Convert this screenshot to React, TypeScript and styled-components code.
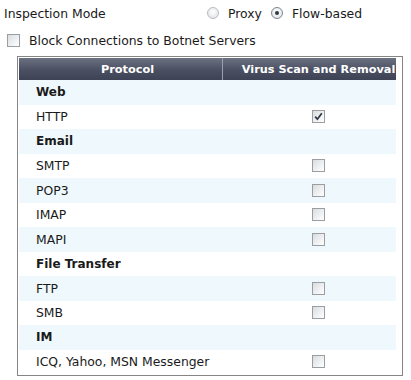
import React from "react";
import styled, { createGlobalStyle } from "styled-components";

const Global = createGlobalStyle`
  html, body { margin: 0; padding: 0; background: #fff; }
  body { font-family: "DejaVu Sans", Verdana, sans-serif; font-size: 12.4px; color: #1a1a1a; }
`;

const Page = styled.div`
  width: 411px;
  height: 380px;
  overflow: hidden;
  display: flex;
  flex-direction: column;
`;

const ModeRow = styled.div`
  display: flex;
  align-items: center;
  height: 26px;
  padding-left: 4px;
`;

const ModeLabel = styled.span`
  width: 203px;
`;

const RadioOption = styled.label`
  display: flex;
  align-items: center;
  gap: 9px;
  margin-right: 9px;
`;

const Radio = styled.span<{ $on?: boolean }>`
  width: 10px;
  height: 10px;
  border-radius: 50%;
  border: 1px solid ${(p) => (p.$on ? "#7d8692" : "#b8bcc0")};
  background: radial-gradient(circle at 50% 40%, #ffffff 0%, #e6e8ea 70%, #d2d5d8 100%);
  display: flex;
  align-items: center;
  justify-content: center;
  &::after {
    content: "";
    display: ${(p) => (p.$on ? "block" : "none")};
    width: 4px;
    height: 4px;
    border-radius: 50%;
    background: #2f3a48;
  }
`;

const BotnetRow = styled.label`
  display: flex;
  align-items: center;
  gap: 9px;
  height: 28px;
  padding-left: 7px;
  margin-bottom: 1px;
`;

const Box = styled.span<{ $checked?: boolean }>`
  width: 11px;
  height: 11px;
  border: 1px solid #9a9ea3;
  background: linear-gradient(135deg, #d9dcdf 0%, #f4f5f6 70%, #ffffff 100%);
  display: flex;
  align-items: center;
  justify-content: center;
  flex: none;
`;

const TableFrame = styled.div`
  margin-left: 17px;
  margin-top: 1px;
  width: 381px;
  border: 1px solid #858585;
  padding: 1px 2px 1px 1px;
`;

const Grid = styled.div`
  display: grid;
  grid-template-columns: 203px 174px;
`;

const HeadCell = styled.div<{ $shift: number }>`
  height: 22px;
  display: flex;
  align-items: center;
  justify-content: center;
  padding-left: ${(p) => p.$shift}px;
  white-space: nowrap;
  overflow: hidden;
  color: #fff;
  font-weight: bold;
  font-size: 11.3px;
  background: linear-gradient(#6c7282, #4a5061 55%, #3d4354);
  & + & { border-left: 1px solid #9aa0ad; }
`;

const Cell = styled.div<{ $alt: boolean; $center?: boolean; $bold?: boolean }>`
  height: 24.5px;
  display: flex;
  align-items: center;
  justify-content: ${(p) => (p.$center ? "center" : "flex-start")};
  padding-left: ${(p) => (p.$center ? "18px" : "17px")};
  background: ${(p) => (p.$alt ? "#eff8fc" : "#ffffff")};
  font-weight: ${(p) => (p.$bold ? "bold" : "normal")};
  font-size: ${(p) => (p.$bold ? "12px" : "12.4px")};
  white-space: nowrap;
`;

type Row = { label: string; group?: boolean; checked?: boolean };

const rows: Row[] = [
  { label: "Web", group: true },
  { label: "HTTP", checked: true },
  { label: "Email", group: true },
  { label: "SMTP" },
  { label: "POP3" },
  { label: "IMAP" },
  { label: "MAPI" },
  { label: "File Transfer", group: true },
  { label: "FTP" },
  { label: "SMB" },
  { label: "IM", group: true },
  { label: "ICQ, Yahoo, MSN Messenger" },
];

const Check = () => (
  <svg width="9" height="9" viewBox="0 0 9 9">
    <path d="M1.2 4.6 L3.4 7.2 L7.8 1.2" fill="none" stroke="#2d3540" strokeWidth="1.7" />
  </svg>
);

export default function App() {
  return (
    <Page>
      <Global />
      <ModeRow>
        <ModeLabel>Inspection Mode</ModeLabel>
        <RadioOption>
          <Radio />
          Proxy
        </RadioOption>
        <RadioOption>
          <Radio $on />
          Flow-based
        </RadioOption>
      </ModeRow>
      <BotnetRow>
        <Box />
        Block Connections to Botnet Servers
      </BotnetRow>
      <TableFrame>
        <Grid>
          <HeadCell $shift={14}>Protocol</HeadCell>
          <HeadCell $shift={18}>Virus Scan and Removal</HeadCell>
          {rows.map((r, i) => (
            <React.Fragment key={r.label}>
              <Cell $alt={i % 2 === 0} $bold={r.group}>{r.label}</Cell>
              <Cell $alt={i % 2 === 0} $center>
                {!r.group && <Box $checked={r.checked}>{r.checked && <Check />}</Box>}
              </Cell>
            </React.Fragment>
          ))}
        </Grid>
      </TableFrame>
    </Page>
  );
}
